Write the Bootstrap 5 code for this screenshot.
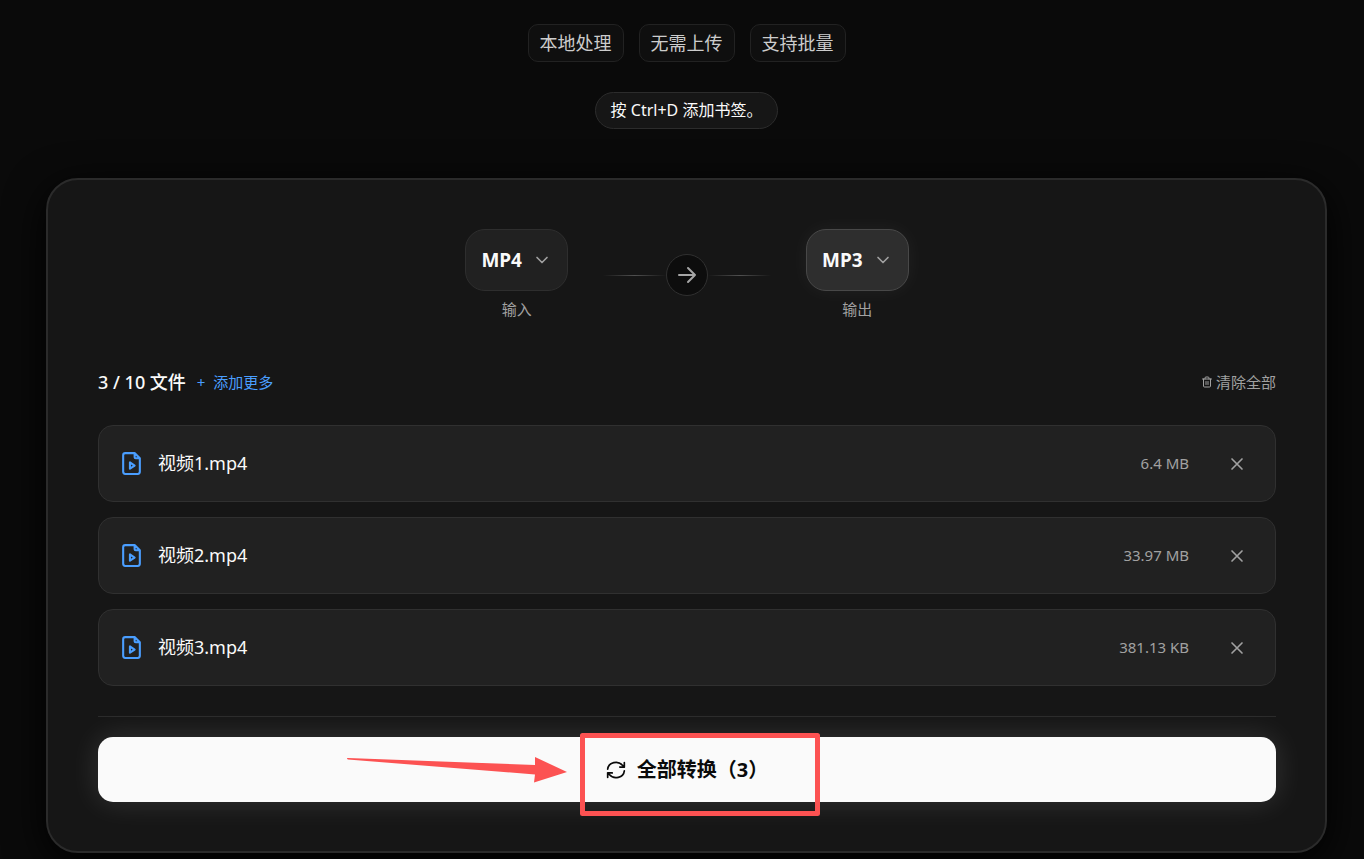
<!DOCTYPE html>
<html lang="zh-CN" data-bs-theme="dark">
<head>
<meta charset="utf-8">
<meta name="viewport" content="width=device-width, initial-scale=1">
<title>MP4 转 MP3</title>
<link href="https://cdn.jsdelivr.net/npm/bootstrap@5.3.0/dist/css/bootstrap.min.css" rel="stylesheet">
<style>
body { background: #0a0a0a; color: #fafafa; font-family: "Noto Sans", "Noto Sans CJK SC", sans-serif; font-size: 15px; line-height: 22px; }
svg { fill: none; stroke: currentColor; stroke-width: 2; stroke-linecap: round; stroke-linejoin: round; flex: none; display: block; }
.page { padding: 24px 37px 6px 46px; }
.chips { gap: 15px; margin-bottom: 30px; }
.chip { border: 1px solid #222; background: #0f0f0f; color: #ccc; border-radius: 10px; padding: 4px 11px; font-size: 18px; line-height: 28px; }
.hint { border: 1px solid #2c2c2c; background: #161616; padding: 7px 15px; font-size: 16px; line-height: 21px; }
.panel { background: #161616; border: 2px solid #2b2b2b; border-radius: 32px; padding: 49px 49px 49px 50px; margin-top: 49px; box-shadow: 0 10px 40px #000; }
.picker { gap: 35px; margin-bottom: 47px; }
.format { height: 62px; gap: 10px; padding: 0 15px; border: 1px solid #2e2e2e; border-radius: 20px; background: #212121; color: #fafafa; font-size: 19px; font-weight: 700; }
.format.active-format { background: #2e2e2e; border-color: #484848; box-shadow: 0 0 20px rgba(255,255,255,.05); }
.format svg, .muted { color: #a1a1a1; }
.format-label { margin: 7px 0 1px; }
.rule { width: 63px; height: 1px; background: linear-gradient(90deg, transparent, #505050, transparent); }
.disc { width: 42px; height: 42px; border: 1px solid #303030; background: #0d0d0d; color: #a6a6a6; }
.list-head { margin-bottom: 29px; }
.list-title { gap: 11px; }
.count { font-size: 18px; line-height: 28px; font-weight: 500; }
.plain { border: 0; background: none; padding: 0; }
.clear { gap: 3px; }
.blue { color: #4a9eff; }
.file-list { gap: 15px; }
.file-row { height: 77px; border: 1px solid #303030; border-radius: 15px; background: #212121; padding: 0 20px; }
.file-name { margin-left: 14px; font-size: 18px; line-height: 28px; }
.file-name, .file-size { padding-bottom: 2px; }
.remove { width: 36px; height: 36px; margin-left: 30px; }
.action { border-top: 1px solid #2b2b2b; margin-top: 30px; padding-top: 20px; }
.convert { height: 65px; gap: 11px; border: 0; border-radius: 15px; background: #fafafa; color: #0a0a0a; font-size: 20px; font-weight: 700; box-shadow: 0 0 30px rgba(255,255,255,.13); }
/* Red callout laid over the convert button */
.callout { position: absolute; left: calc(50% - 341px); top: -6px; pointer-events: none; }
</style>
</head>
<body>
<main class="page">
  <div class="chips d-flex justify-content-center">
    <span class="chip">本地处理</span><span class="chip">无需上传</span><span class="chip">支持批量</span>
  </div>
  <div class="d-flex justify-content-center"><div class="hint rounded-pill">按 Ctrl+D 添加书签。</div></div>

  <section class="panel">
    <div class="picker d-flex justify-content-center align-items-center">
      <div class="text-center">
        <button type="button" class="format d-flex align-items-center" aria-describedby="in-label">MP4
          <svg width="20" height="20" viewBox="0 0 24 24"><path d="m6 9 6 6 6-6"/></svg></button>
        <div class="format-label muted" id="in-label">输入</div>
      </div>
      <div class="d-flex align-items-center">
        <div class="rule"></div>
        <div class="disc rounded-circle d-flex align-items-center justify-content-center">
          <svg width="24" height="24" viewBox="0 0 24 24"><path d="M4 12h16M13 5l7 7-7 7"/></svg>
        </div>
        <div class="rule"></div>
      </div>
      <div class="text-center">
        <button type="button" class="format active-format d-flex align-items-center" aria-describedby="out-label">MP3
          <svg width="20" height="20" viewBox="0 0 24 24"><path d="m6 9 6 6 6-6"/></svg></button>
        <div class="format-label muted" id="out-label">输出</div>
      </div>
    </div>

    <div class="list-head d-flex align-items-center justify-content-between">
      <div class="list-title d-flex align-items-center">
        <span class="count">3 / 10 文件</span>
        <button type="button" class="plain blue">+&nbsp; 添加更多</button>
      </div>
      <button type="button" class="plain muted clear d-flex align-items-center">
        <svg width="12" height="12" viewBox="0 0 24 24"><path d="M3 6h18M19 6v14a2 2 0 0 1-2 2H7a2 2 0 0 1-2-2V6M8 6V4a2 2 0 0 1 2-2h4a2 2 0 0 1 2 2v2M10 11v6M14 11v6"/></svg>清除全部</button>
    </div>

    <ul class="file-list list-unstyled d-flex flex-column mb-0">
      <li class="file-row d-flex align-items-center">
        <svg class="blue" width="25" height="25" viewBox="0 0 24 24"><path d="M15 2H6a2 2 0 0 0-2 2v16a2 2 0 0 0 2 2h12a2 2 0 0 0 2-2V7ZM15 2v4a1 1 0 0 0 1 1h4M10.500 11v6l4.500-3Z"/></svg>
        <span class="file-name">视频1.mp4</span><span class="file-size muted ms-auto">6.4 MB</span>
        <button type="button" class="plain muted remove d-flex align-items-center justify-content-center" aria-label="移除 视频1.mp4"><svg width="20" height="20" viewBox="0 0 24 24"><path d="M18 6 6 18M6 6l12 12"/></svg></button>
      </li>
      <li class="file-row d-flex align-items-center">
        <svg class="blue" width="25" height="25" viewBox="0 0 24 24"><path d="M15 2H6a2 2 0 0 0-2 2v16a2 2 0 0 0 2 2h12a2 2 0 0 0 2-2V7ZM15 2v4a1 1 0 0 0 1 1h4M10.500 11v6l4.500-3Z"/></svg>
        <span class="file-name">视频2.mp4</span><span class="file-size muted ms-auto">33.97 MB</span>
        <button type="button" class="plain muted remove d-flex align-items-center justify-content-center" aria-label="移除 视频2.mp4"><svg width="20" height="20" viewBox="0 0 24 24"><path d="M18 6 6 18M6 6l12 12"/></svg></button>
      </li>
      <li class="file-row d-flex align-items-center">
        <svg class="blue" width="25" height="25" viewBox="0 0 24 24"><path d="M15 2H6a2 2 0 0 0-2 2v16a2 2 0 0 0 2 2h12a2 2 0 0 0 2-2V7ZM15 2v4a1 1 0 0 0 1 1h4M10.500 11v6l4.500-3Z"/></svg>
        <span class="file-name">视频3.mp4</span><span class="file-size muted ms-auto">381.13 KB</span>
        <button type="button" class="plain muted remove d-flex align-items-center justify-content-center" aria-label="移除 视频3.mp4"><svg width="20" height="20" viewBox="0 0 24 24"><path d="M18 6 6 18M6 6l12 12"/></svg></button>
      </li>
    </ul>

    <div class="action">
      <div class="position-relative">
        <button type="button" class="convert w-100 d-flex align-items-center justify-content-center">
          <svg width="20" height="20" viewBox="0 0 24 24"><path d="M2 11a10 9 0 0 1 18-4.500l2 2M22 3v5.500h-5.500M22 13a10 9 0 0 1-18 4.500l-2-2M2 21v-5.500h5.500"/></svg>全部转换（3）</button>
        <svg class="callout" width="476" height="86" viewBox="0 0 476 86" aria-hidden="true">
          <path d="M1 27Q1 28 2 28.500L189 43.500 188 51.500 221 41 189 26V34L2 27Z" fill="#fc5252" stroke="none"/>
          <rect x="236.500" y="4.500" width="235" height="78" stroke="#fc5252" stroke-width="5"/>
        </svg>
      </div>
    </div>
  </section>
</main>
<script src="https://cdn.jsdelivr.net/npm/bootstrap@5.3.0/dist/js/bootstrap.bundle.min.js"></script>
</body>
</html>
